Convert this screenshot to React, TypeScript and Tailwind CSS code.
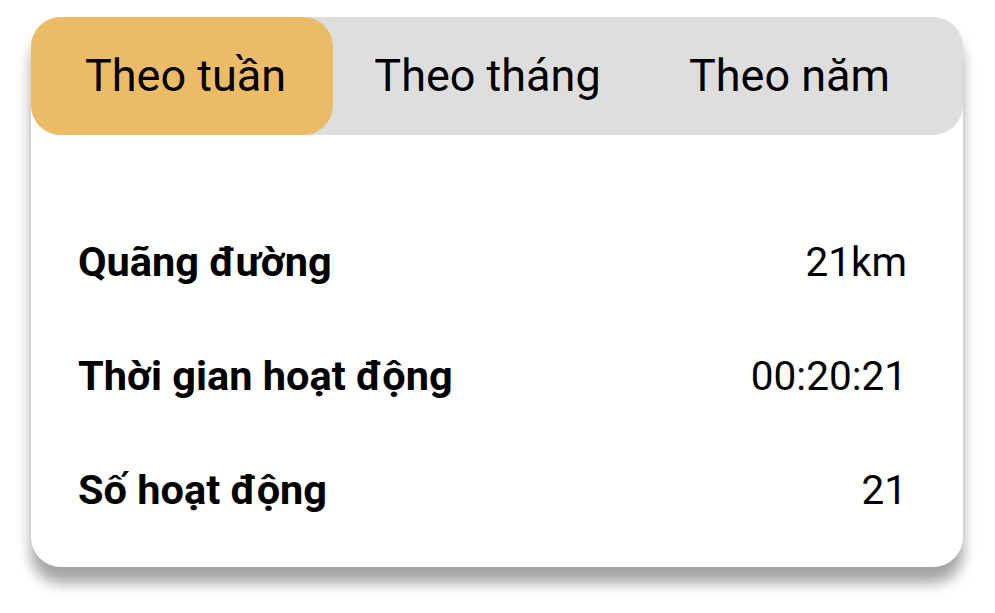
export default function App() {
  const tabs = ["Theo tuần", "Theo tháng", "Theo năm"];
  const rows = [
    { label: "Quãng đường", value: "21km" },
    { label: "Thời gian hoạt động", value: "00:20:21" },
    { label: "Số hoạt động", value: "21" },
  ];

  return (
    <div className="w-[995px] h-[613px] bg-white pt-[17px] pl-[31px] font-['Roboto',sans-serif] text-black">
      <div className="w-[932px] h-[550px] bg-white rounded-[30px] shadow-[0_16px_14px_rgba(0,0,0,0.36)] flex flex-col">
        {/* tabs */}
        <div className="h-[118px] bg-[#dedede] rounded-[30px] flex">
          {tabs.map((t, i) => (
            <div
              key={t}
              className={
                i === 0
                  ? "w-[302px] h-full rounded-[30px] bg-[#ecbb67] flex items-center justify-center pl-[7px] text-[45px]"
                  : "w-[302px] h-full flex items-center justify-center pl-[7px] text-[45px]"
              }
            >
              {t}
            </div>
          ))}
        </div>

        {/* stats */}
        <div className="flex flex-col pt-[70px] pl-[47px] pr-[56px]">
          {rows.map((r) => (
            <div key={r.label} className="h-[114px] flex items-center justify-between">
              <span className="text-[41.5px] font-bold">{r.label}</span>
              <span className="text-[40.5px]">{r.value}</span>
            </div>
          ))}
        </div>
      </div>
    </div>
  );
}
